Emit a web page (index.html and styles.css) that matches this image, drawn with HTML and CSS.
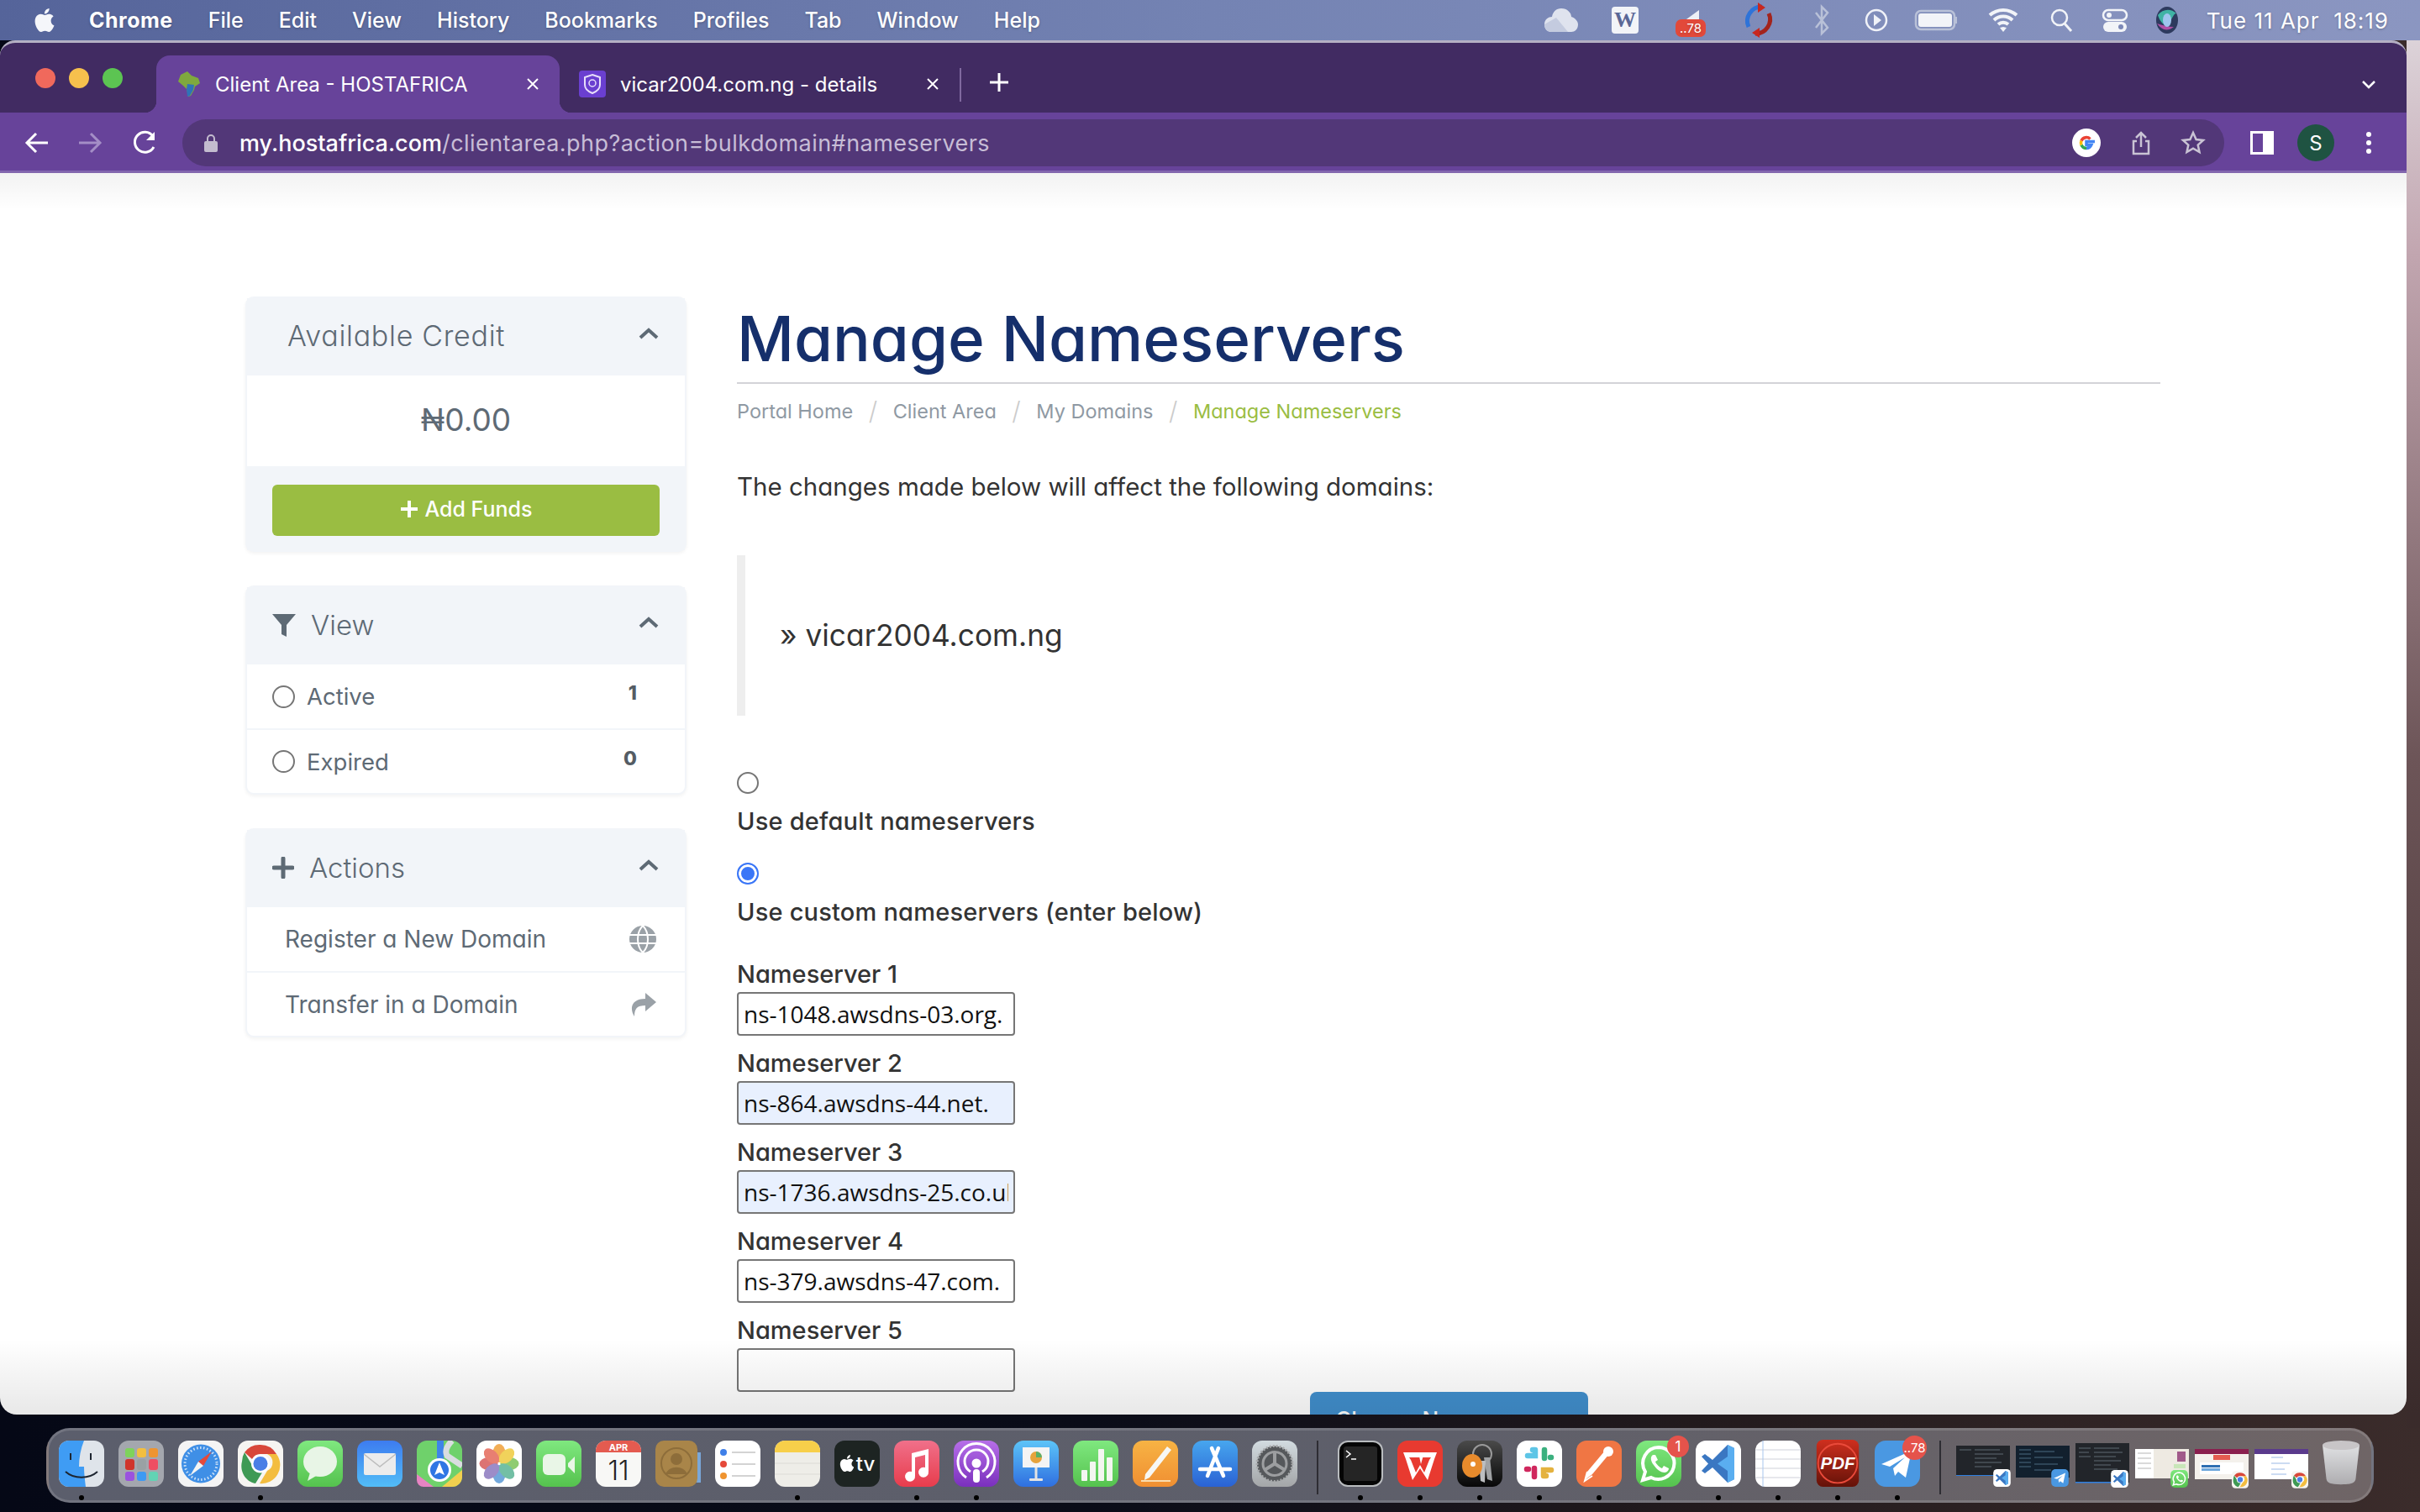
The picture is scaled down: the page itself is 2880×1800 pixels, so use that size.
FILE: index.html
```html
<!DOCTYPE html>
<html lang="en">
<head>
    <meta charset="UTF-8">
    <title>Client Area - HOSTAFRICA</title>
    <link rel="stylesheet" href="styles.css">
</head>
<body>
    <svg class="defs" xmlns="http://www.w3.org/2000/svg">
        <defs>
            <linearGradient id="g-blue" x1="0" y1="0" x2="0" y2="1"><stop offset="0" stop-color="#3d7cf0"/><stop offset="1" stop-color="#52bdf7"/></linearGradient>
            <linearGradient id="g-green" x1="0" y1="0" x2="0" y2="1"><stop offset="0" stop-color="#7fe87f"/><stop offset="1" stop-color="#55c24e"/></linearGradient>
            <linearGradient id="g-music" x1="0" y1="0" x2="0" y2="1"><stop offset="0" stop-color="#f0708a"/><stop offset="1" stop-color="#e83c4c"/></linearGradient>
            <linearGradient id="g-pod" x1="0" y1="0" x2="0" y2="1"><stop offset="0" stop-color="#b66ee8"/><stop offset="1" stop-color="#7a30bd"/></linearGradient>
            <linearGradient id="g-key" x1="0" y1="0" x2="0" y2="1"><stop offset="0" stop-color="#5cc4f8"/><stop offset="1" stop-color="#2f6fe0"/></linearGradient>
            <linearGradient id="g-pages" x1="0" y1="0" x2="0" y2="1"><stop offset="0" stop-color="#f7b344"/><stop offset="1" stop-color="#f08f32"/></linearGradient>
            <linearGradient id="g-app" x1="0" y1="0" x2="0" y2="1"><stop offset="0" stop-color="#47a6ee"/><stop offset="1" stop-color="#2a62d4"/></linearGradient>
            <linearGradient id="g-gear" x1="0" y1="0" x2="0" y2="1"><stop offset="0" stop-color="#d2dbe0"/><stop offset="1" stop-color="#a4a6a8"/></linearGradient>
            <linearGradient id="g-pdf" x1="0" y1="0" x2="0" y2="1"><stop offset="0" stop-color="#cf2f1e"/><stop offset="1" stop-color="#641208"/></linearGradient>
            <linearGradient id="g-trash" x1="0" y1="0" x2="0" y2="1"><stop offset="0" stop-color="#dfe0e2"/><stop offset="1" stop-color="#aeadb0"/></linearGradient>
            <linearGradient id="g-keychain" x1="0" y1="0" x2="0" y2="1"><stop offset="0" stop-color="#4a4a4a"/><stop offset="1" stop-color="#070707"/></linearGradient>
            <symbol id="apple" viewBox="0 0 24 24"><path d="M12.152 6.896c-.948 0-2.415-1.078-3.96-1.04-2.04.027-3.91 1.183-4.961 3.014-2.117 3.675-.546 9.103 1.519 12.09 1.013 1.454 2.208 3.09 3.792 3.039 1.52-.065 2.09-.987 3.935-.987 1.831 0 2.35.987 3.96.948 1.637-.026 2.676-1.48 3.676-2.948 1.156-1.688 1.636-3.325 1.662-3.415-.039-.013-3.182-1.221-3.22-4.857-.026-3.04 2.48-4.494 2.597-4.559-1.429-2.09-3.623-2.324-4.39-2.376-2-.156-3.675 1.09-4.61 1.09zM15.53 3.83c.843-1.012 1.4-2.427 1.245-3.83-1.207.052-2.662.805-3.532 1.818-.78.896-1.454 2.338-1.273 3.714 1.338.104 2.715-.688 3.559-1.701"/></symbol>
            <symbol id="chrome" viewBox="0 0 54 55">
                <rect width="54" height="55" rx="12" fill="#f6f5f2"/>
                <path d="M27 5a22 22 0 0 1 19 11H27a11 11 0 0 0-10 6L8 14A22 22 0 0 1 27 5z" fill="#d8473a"/>
                <path d="M8 14l10 17a11 11 0 0 0 11 7l-8 13C9 49 2 36 5 25a22 22 0 0 1 3-11z" fill="#3f9a55"/>
                <path d="M46 16a22 22 0 0 1-20 35l9-15a11 11 0 0 0 0-20z" fill="#f3bd3f"/>
                <circle cx="27" cy="27.5" r="11" fill="#fff"/><circle cx="27" cy="27.5" r="8.5" fill="#4a7fe6"/>
            </symbol>
            <symbol id="code" viewBox="0 0 54 55">
                <rect width="54" height="55" rx="12" fill="#fff"/>
                <path d="M38 5l8 4v37l-8 4L20 32l-9 7-4-3 8-8.500-8-8.500 4-3 9 7z" fill="#3a77c2"/><path d="M38 5l8 4v37l-8 4V36L26 27.500 38 19z" fill="#5aaef0"/>
            </symbol>
            <symbol id="tele" viewBox="0 0 54 55">
                <rect width="54" height="55" rx="13" fill="#4a98e2"/>
                <path d="M8 28L44 12 37 44 28 37 24 42 22 33 36 20 18 31z" fill="#fff"/>
            </symbol>
            <symbol id="whats" viewBox="0 0 54 55">
                <rect width="54" height="55" rx="13" fill="url(#g-green)"/>
                <path d="M27 8a19 19 0 0 0-16 29l-3 10 10-3A19 19 0 1 0 27 8z" fill="none" stroke="#fff" stroke-width="4"/>
                <path d="M20 17c-3 2-3 7 1 12 4 6 9 9 13 9 3 0 5-3 5-5l-6-3-2 3c-3-1-7-5-8-8l3-2-3-6z" fill="#fff"/>
            </symbol>
        </defs>
    </svg>

    <div class="menubar">
        <svg class="apple-logo" width="28" height="34"><use href="#apple"/></svg>
        <span class="menu-app">Chrome</span>
        <span>File</span>
        <span>Edit</span>
        <span>View</span>
        <span>History</span>
        <span>Bookmarks</span>
        <span>Profiles</span>
        <span>Tab</span>
        <span>Window</span>
        <span>Help</span>
        <div class="status">
            <svg width="76" height="48" viewBox="0 0 76 48"><path d="M38 10c7 0 12 5 12 10 4 1 8 5 8 9 0 6-4 9-8 9H26c-5 0-8-4-8-9 0-6 5-9 9-9 1-6 5-10 11-10z" fill="#dfe3ee"/><path d="M18 29l14-8 14 17H26c-5 0-8-4-8-9z" fill="#c4cbdf"/></svg>
            <svg width="76" height="48" viewBox="0 0 76 48"><rect x="22" y="8" width="32" height="32" rx="4" fill="#f2f4f8"/><text x="38" y="32" class="status-w">W</text></svg>
            <svg width="80" height="48" viewBox="0 0 80 48"><path d="M50 12L28 28h12l10 6z" fill="#eef0f6"/><rect x="22" y="23" width="36" height="21" rx="7" fill="#e2493a"/><text x="40" y="39" class="status-78">..78</text></svg>
            <svg width="82" height="48" viewBox="0 0 82 48"><path d="M45 8A17 17 0 0 0 29 32" fill="none" stroke="#2e73d8" stroke-width="5"/><path d="M37 40A17 17 0 0 0 53 16" fill="none" stroke="#a3241c" stroke-width="5"/><path d="M40 3l9 6-9 6zM42 45l-9-6 9-6z" fill="#c8281f"/></svg>
            <svg width="68" height="48" viewBox="0 0 68 48"><path d="M27 15l14 18-7 7V8l7 7-14 18" fill="none" stroke="#b9c1d8" stroke-width="2.500"/></svg>
            <svg width="62" height="48" viewBox="0 0 62 48"><circle cx="31" cy="24" r="12" fill="none" stroke="#f0f2f8" stroke-width="2.500"/><path d="M28 17l9 7-9 7z" fill="#f0f2f8"/></svg>
            <svg width="80" height="48" viewBox="0 0 80 48"><rect x="16" y="13" width="46" height="22" rx="6" fill="none" stroke="#b9c1d8" stroke-width="2.500"/><rect x="19" y="16" width="40" height="16" rx="3" fill="#f2f4f8"/><rect x="63" y="20" width="2" height="8" fill="#b9c1d8"/></svg>
            <svg width="80" height="48" viewBox="0 0 80 48"><path d="M24 18a24 24 0 0 1 32 0M29 24a16 16 0 0 1 22 0M34 29a9 9 0 0 1 12 0" fill="none" stroke="#f2f4f8" stroke-width="4"/><path d="M36 33l4-1 4 1-4 5z" fill="#f2f4f8"/></svg>
            <svg width="58" height="48" viewBox="0 0 58 48"><circle cx="27" cy="21" r="9" fill="none" stroke="#f2f4f8" stroke-width="2.500"/><path d="M33 28l8 9" stroke="#f2f4f8" stroke-width="3"/></svg>
            <svg width="70" height="48" viewBox="0 0 70 48"><rect x="21" y="12" width="28" height="12" rx="6" fill="none" stroke="#f2f4f8" stroke-width="2.500"/><rect x="21" y="26" width="28" height="12" rx="6" fill="#f2f4f8"/><circle cx="28" cy="18" r="3" fill="#f2f4f8"/><circle cx="42" cy="32" r="3" fill="#7c88b6"/></svg>
            <svg width="54" height="48" viewBox="0 0 54 48"><ellipse cx="27" cy="24" rx="13" ry="16" fill="#2d3a5e"/><path d="M16 18c6-8 16-8 22-2-4-1-6 12-12 14-4 0-8-6-10-12z" fill="#3fb3a4"/><path d="M15 28c6 8 12 10 20 4-6 0-14-2-20-4z" fill="#b04fa5"/><ellipse cx="27" cy="24" rx="5" ry="8" fill="#9fc5ee"/></svg>
            <span class="clock">Tue 11 Apr&nbsp; 18:19</span>
        </div>
    </div>

    <div class="window">
        <div class="tabstrip">
            <div class="lights">
                <i class="light red"></i>
                <i class="light yellow"></i>
                <i class="light green"></i>
            </div>
            <div class="tab active">
                <svg width="28" height="32" viewBox="0 0 28 32"><path d="M4 5l8-4 5 5 8 3 2 6-6 4-1 4-4 7-3 1-2-9-4-4-6-5z" fill="#7fa93e"/><path d="M12 16l8 1-1 6-4 7-3 1-1-9z" fill="#2f72b8"/></svg>
                <span class="tab-title">Client Area - HOSTAFRICA</span>
                <svg class="tab-close" width="16" height="16" viewBox="0 0 16 16"><path d="M2 2l12 12M14 2L2 14" stroke="#fff" stroke-width="2"/></svg>
            </div>
            <div class="tab">
                <svg width="32" height="32" viewBox="0 0 32 32"><rect width="32" height="32" rx="4" fill="#6a3fd0"/><path d="M16 5l9 3v9c0 5-4 8-9 10-5-2-9-5-9-10V8z" fill="none" stroke="#e7defa" stroke-width="2"/><circle cx="16" cy="15" r="4" fill="none" stroke="#e7defa" stroke-width="1.500"/></svg>
                <span class="tab-title">vicar2004.com.ng - details</span>
                <svg class="tab-close" width="16" height="16" viewBox="0 0 16 16"><path d="M2 2l12 12M14 2L2 14" stroke="#fff" stroke-width="2"/></svg>
            </div>
            <span class="tab-sep"></span>
            <svg class="tab-new" width="24" height="24" viewBox="0 0 24 24"><path d="M12 1v22M1 12h22" stroke="#fff" stroke-width="3"/></svg>
            <svg class="tab-list" width="18" height="12" viewBox="0 0 18 12"><path d="M2 2l7 7 7-7" fill="none" stroke="#fff" stroke-width="2.500"/></svg>
        </div>

        <div class="toolbar">
            <svg class="tool" width="30" height="28" viewBox="0 0 30 28"><path d="M28 14H4M14 3L3 14l11 11" fill="none" stroke="#fff" stroke-width="3"/></svg>
            <svg class="tool" width="30" height="28" viewBox="0 0 30 28"><path d="M2 14h24M16 3l11 11-11 11" fill="none" stroke="#a48ec6" stroke-width="3"/></svg>
            <svg class="tool tool-reload" width="30" height="30" viewBox="0 0 30 30"><path d="M25 20A12 12 0 1 1 24 7" fill="none" stroke="#fff" stroke-width="3"/><path d="M26 2v10H16z" fill="#fff"/></svg>
            <div class="omnibox">
                <svg width="16" height="22" viewBox="0 0 16 22"><path d="M4 10V6a4 4 0 0 1 8 0v4" fill="none" stroke="#c3bccf" stroke-width="2"/><rect y="9" width="16" height="13" rx="2" fill="#c3bccf"/></svg>
                <span class="url"><b>my.hostafrica.com</b>/clientarea.php?action=bulkdomain#nameservers</span>
                <svg class="omni-g" width="34" height="34" viewBox="0 0 34 34"><circle cx="17" cy="17" r="17" fill="#fff"/><path d="M27 15.500H17v4h5.800a6.500 6.500 0 0 1-5.800 4" fill="none" stroke="#4285f4" stroke-width="3.500"/><path d="M17 23.500a6.500 6.500 0 0 1-6-4" fill="none" stroke="#34a853" stroke-width="3.500"/><path d="M11 19.500a6.500 6.500 0 0 1 0-5" fill="none" stroke="#fbbc05" stroke-width="3.500"/><path d="M11 14.500a6.500 6.500 0 0 1 10.500-2" fill="none" stroke="#ea4335" stroke-width="3.500"/></svg>
                <svg class="omni-share" width="26" height="30" viewBox="0 0 26 30"><path d="M13 20V3M7 9l6-6 6 6M8 13H4v15h18V13h-4" fill="none" stroke="#c9c3d4" stroke-width="2.500"/></svg>
                <svg width="30" height="30" viewBox="0 0 30 30"><path d="M15 3l3.600 8 8.400.9-6.300 5.700 1.800 8.400L15 21.700 7.500 26l1.800-8.400L3 11.900l8.400-.9z" fill="none" stroke="#c9c3d4" stroke-width="2.500"/></svg>
            </div>
            <span class="side-panel"></span>
            <span class="avatar">S</span>
            <span class="kebab"><i></i><i></i><i></i></span>
        </div>

        <div class="page">
            <div class="sidebar">
                <div class="panel">
                    <div class="panel-head">
                        <span class="panel-title credit-title">Available Credit</span>
                        <svg class="chevron" width="26" height="16" viewBox="0 0 26 16"><path d="M3 13l10-9 10 9" fill="none" stroke="#5e6a75" stroke-width="4"/></svg>
                    </div>
                    <div class="credit-amount">₦0.00</div>
                    <div class="panel-foot">
                        <a class="btn-funds" href="#"><svg width="22" height="22" viewBox="0 0 22 22"><path d="M11 1v20M1 11h20" stroke="#fff" stroke-width="4"/></svg>Add Funds</a>
                    </div>
                </div>

                <div class="panel">
                    <div class="panel-head">
                        <svg width="28" height="28" viewBox="0 0 28 28"><path d="M0 1h28L17 14v14l-6-3V14z" fill="#5e6a75"/></svg>
                        <span class="panel-title">View</span>
                        <svg class="chevron" width="26" height="16" viewBox="0 0 26 16"><path d="M3 13l10-9 10 9" fill="none" stroke="#5e6a75" stroke-width="4"/></svg>
                    </div>
                    <label class="row"><input type="radio" name="view"><span>Active</span><b class="count">1</b></label>
                    <label class="row"><input type="radio" name="view"><span>Expired</span><b class="count">0</b></label>
                </div>

                <div class="panel">
                    <div class="panel-head">
                        <svg width="26" height="26" viewBox="0 0 26 26"><path d="M13 2v22M2 13h22" stroke="#5e6a75" stroke-width="5" stroke-linecap="round"/></svg>
                        <span class="panel-title">Actions</span>
                        <svg class="chevron" width="26" height="16" viewBox="0 0 26 16"><path d="M3 13l10-9 10 9" fill="none" stroke="#5e6a75" stroke-width="4"/></svg>
                    </div>
                    <a class="row link-row" href="#"><span>Register a New Domain</span>
                        <svg width="32" height="32" viewBox="0 0 32 32"><circle cx="16" cy="16" r="16" fill="#9aa1a7"/><path d="M0 11h32M0 21h32M16 0c-8 8-8 24 0 32M16 0c8 8 8 24 0 32" fill="none" stroke="#fff" stroke-width="2"/></svg>
                    </a>
                    <a class="row link-row" href="#"><span>Transfer in a Domain</span>
                        <svg width="32" height="30" viewBox="0 0 32 30"><path d="M19 1l13 11-13 11v-7C11 16 6 18 6 29 0 20 2 8 19 8z" fill="#9aa1a7"/></svg>
                    </a>
                </div>
            </div>

            <div class="main">
                <h1 class="page-title">Manage Nameservers</h1>
                <div class="crumbs">
                    <a href="#">Portal Home</a><i>/</i>
                    <a href="#">Client Area</a><i>/</i>
                    <a href="#">My Domains</a><i>/</i>
                    <span>Manage Nameservers</span>
                </div>
                <p class="intro">The changes made below will affect the following domains:</p>
                <blockquote class="domains">» vicar2004.com.ng</blockquote>

                <form class="ns-form">
                    <input class="ns-radio" type="radio" name="ns">
                    <label class="ns-choice">Use default nameservers</label>
                    <input class="ns-radio" type="radio" name="ns" checked>
                    <label class="ns-choice">Use custom nameservers (enter below)</label>

                    <div class="ns-fields">
                        <label>Nameserver 1</label>
                        <input type="text" value="ns-1048.awsdns-03.org.">
                        <label>Nameserver 2</label>
                        <input class="autofill" type="text" value="ns-864.awsdns-44.net.">
                        <label>Nameserver 3</label>
                        <input class="autofill" type="text" value="ns-1736.awsdns-25.co.uk.">
                        <label>Nameserver 4</label>
                        <input type="text" value="ns-379.awsdns-47.com.">
                        <label>Nameserver 5</label>
                        <input type="text">
                    </div>
                    <div class="ns-submit"><button type="button">Change Nameservers</button></div>
                </form>
            </div>
        </div>
    </div>

    <div class="dock">
        <div class="app run"><svg viewBox="0 0 54 55"><rect width="54" height="55" rx="12" fill="#dfe4ea"/><path d="M12 0h18c-4 10-6 20-6 31h6c0 8 1 16 2 24H12A12 12 0 0 1 0 43V12A12 12 0 0 1 12 0z" fill="#3f9cf4"/><path d="M8 37c10 9 28 9 38 0" fill="none" stroke="#1d2530" stroke-width="2"/><path d="M14 15v8M38 15v8" stroke="#1d2530" stroke-width="2"/></svg></div>
        <div class="app"><svg viewBox="0 0 54 55"><rect width="54" height="55" rx="12" fill="#a4a7ae"/><rect x="8" y="9" width="11" height="11" rx="3" fill="#7ed35b"/><rect x="22" y="9" width="11" height="11" rx="3" fill="#f3bf3f"/><rect x="36" y="9" width="11" height="11" rx="3" fill="#ee9430"/><rect x="8" y="22" width="11" height="13" rx="3" fill="#d0352c"/><rect x="22" y="22" width="11" height="13" rx="3" fill="#9aa1a4"/><rect x="36" y="22" width="11" height="13" rx="3" fill="#ee4e62"/><rect x="8" y="37" width="11" height="11" rx="3" fill="#9a52df"/><rect x="22" y="37" width="11" height="11" rx="3" fill="#3d9af2"/><rect x="36" y="37" width="11" height="11" rx="3" fill="#62d3b4"/></svg></div>
        <div class="app"><svg viewBox="0 0 54 55"><rect width="54" height="55" rx="12" fill="#f4f4f4"/><circle cx="27" cy="27.500" r="23" fill="#3f8fe6"/><circle cx="27" cy="27.500" r="19" fill="none" stroke="#cfe3f8" stroke-width="3" stroke-dasharray="1.500 2.500"/><path d="M40 13L24 25l6 5z" fill="#e5493a"/><path d="M14 42l10-17 6 5z" fill="#f4f4f4"/></svg></div>
        <div class="app run"><svg viewBox="0 0 54 55"><use href="#chrome"/></svg></div>
        <div class="app"><svg viewBox="0 0 54 55"><rect width="54" height="55" rx="12" fill="url(#g-green)"/><ellipse cx="27" cy="25" rx="20" ry="18" fill="#e8f5e6"/><path d="M15 38l-3 10 12-7z" fill="#e8f5e6"/></svg></div>
        <div class="app"><svg viewBox="0 0 54 55"><rect width="54" height="55" rx="12" fill="url(#g-blue)"/><rect x="8" y="15" width="38" height="26" rx="2" fill="#ececec"/><path d="M8 16l19 15 19-15" fill="none" stroke="#bdbdbd" stroke-width="1.500"/></svg></div>
        <div class="app"><svg viewBox="0 0 54 55"><rect width="54" height="55" rx="12" fill="#6fd16b"/><path d="M0 40l20 15H8A8 8 0 0 1 0 47z" fill="#e784c3"/><path d="M30 55l24-20v8a12 12 0 0 1-12 12z" fill="#f2d04f"/><path d="M24 0h8v22h-8z" fill="#3f84e8"/><path d="M54 30L36 18c-3-6 0-12 6-18" fill="none" stroke="#d9dde0" stroke-width="7"/><circle cx="27" cy="35" r="14" fill="#fff"/><circle cx="27" cy="35" r="11" fill="#2f76e4"/><path d="M27 26l6 15-6-3-6 3z" fill="#fff"/></svg></div>
        <div class="app"><svg viewBox="0 0 54 55"><rect width="54" height="55" rx="12" fill="#fff"/><g opacity=".85"><ellipse cx="27" cy="15" rx="7.500" ry="11" fill="#f0a03a"/><ellipse cx="27" cy="40" rx="7.500" ry="11" fill="#5a9ad6"/><ellipse cx="14.500" cy="27.500" rx="11" ry="7.500" fill="#d65b5b"/><ellipse cx="39.500" cy="27.500" rx="11" ry="7.500" fill="#7cc45a"/><ellipse cx="18" cy="18.500" rx="7" ry="11" transform="rotate(-45 18 18.500)" fill="#e4695a"/><ellipse cx="36" cy="18.500" rx="7" ry="11" transform="rotate(45 36 18.500)" fill="#efcb3f"/><ellipse cx="18" cy="36.500" rx="7" ry="11" transform="rotate(45 18 36.500)" fill="#8b78bf"/><ellipse cx="36" cy="36.500" rx="7" ry="11" transform="rotate(-45 36 36.500)" fill="#5bb596"/></g></svg></div>
        <div class="app"><svg viewBox="0 0 54 55"><rect width="54" height="55" rx="12" fill="url(#g-green)"/><rect x="8" y="16" width="27" height="25" rx="6" fill="#e9f6e7"/><path d="M38 27l8-8v20l-8-8z" fill="#e9f6e7"/></svg></div>
        <div class="app"><svg viewBox="0 0 54 55"><rect width="54" height="55" rx="12" fill="#f8f8f6"/><path d="M0 14V12A12 12 0 0 1 12 0h30a12 12 0 0 1 12 12v2z" fill="#e45b50"/><text x="27" y="11.500" class="dock-cal-m">APR</text><text x="27" y="47" class="dock-cal-d">11</text></svg></div>
        <div class="app"><svg viewBox="0 0 54 55"><rect x="44" y="14" width="10" height="36" fill="#7aa7d8"/><rect width="50" height="55" rx="10" fill="#a98549"/><circle cx="25" cy="27" r="18" fill="none" stroke="#8d6d3a" stroke-width="2"/><circle cx="25" cy="22" r="7" fill="#8d6d3a"/><path d="M12 40c4-11 22-11 26 0" fill="#8d6d3a"/></svg></div>
        <div class="app"><svg viewBox="0 0 54 55"><rect width="54" height="55" rx="12" fill="#fff"/><circle cx="10" cy="14" r="4" fill="#3f7fe8"/><circle cx="10" cy="28" r="4" fill="#e5493a"/><circle cx="10" cy="42" r="4" fill="#ef9430"/><path d="M20 14h28M20 28h28M20 42h28" stroke="#c5c5c5" stroke-width="1.500"/></svg></div>
        <div class="app run"><svg viewBox="0 0 54 55"><rect width="54" height="55" rx="12" fill="#eeede8"/><path d="M0 14V12A12 12 0 0 1 12 0h30a12 12 0 0 1 12 12v2z" fill="#f7cf4a"/><path d="M0 27h54M0 40h54" stroke="#dcdbd6"/></svg></div>
        <div class="app"><svg viewBox="0 0 54 55"><rect width="54" height="55" rx="12" fill="#1d2422"/><svg x="5" y="16" width="20" height="22" fill="#fff"><use href="#apple"/></svg><text x="37" y="36" class="dock-tv">tv</text></svg></div>
        <div class="app run"><svg viewBox="0 0 54 55"><rect width="54" height="55" rx="12" fill="url(#g-music)"/><path d="M21 15l20-5v27a6 6 0 1 1-4-5V17l-12 3v22a6 6 0 1 1-4-5z" fill="#fff"/></svg></div>
        <div class="app run"><svg viewBox="0 0 54 55"><rect width="54" height="55" rx="12" fill="url(#g-pod)"/><path d="M15 44a22 22 0 1 1 24 0M20 37a14 14 0 1 1 14 0" fill="none" stroke="#fff" stroke-width="3"/><circle cx="27" cy="27" r="5.500" fill="#fff"/><rect x="23" y="34" width="8" height="16" rx="4" fill="#fff"/></svg></div>
        <div class="app"><svg viewBox="0 0 54 55"><rect width="54" height="55" rx="12" fill="url(#g-key)"/><rect x="11" y="8" width="32" height="24" fill="#f4f4f4"/><circle cx="27" cy="20" r="7" fill="#e6a33c"/><path d="M27 20V13a7 7 0 0 1 7 7z" fill="#5ab06a"/><rect x="25.500" y="32" width="3" height="14" fill="#e4e4e4"/><rect x="19" y="45" width="16" height="3" rx="1" fill="#e4e4e4"/></svg></div>
        <div class="app"><svg viewBox="0 0 54 55"><rect width="54" height="55" rx="12" fill="url(#g-green)"/><rect x="10" y="35" width="7" height="13" rx="1" fill="#f3f6f0"/><rect x="20" y="25" width="7" height="23" rx="1" fill="#f3f6f0"/><rect x="30" y="10" width="7" height="38" rx="1" fill="#f3f6f0"/><rect x="40" y="20" width="7" height="28" rx="1" fill="#f3f6f0"/></svg></div>
        <div class="app"><svg viewBox="0 0 54 55"><rect width="54" height="55" rx="12" fill="url(#g-pages)"/><path d="M41 7l5 4-26 33-6 3 1-7z" fill="#f7f7f4"/><rect x="10" y="47" width="35" height="2" fill="#f9dcb0"/></svg></div>
        <div class="app"><svg viewBox="0 0 54 55"><rect width="54" height="55" rx="12" fill="url(#g-app)"/><path d="M31 9L18 42M23 9l14 33M9 34h36" stroke="#fff" stroke-width="4.500" stroke-linecap="round"/></svg></div>
        <div class="app"><svg viewBox="0 0 54 55"><rect width="54" height="55" rx="12" fill="url(#g-gear)"/><circle cx="27" cy="27.500" r="21" fill="#55585b"/><circle cx="27" cy="27.500" r="21" fill="none" stroke="#a7a9ab" stroke-width="3" stroke-dasharray="2 2"/><circle cx="27" cy="27.500" r="14" fill="none" stroke="#9c9ea0" stroke-width="3"/><path d="M27 27.500V14M27 27.500L15 35M27 27.500L39 35" stroke="#9c9ea0" stroke-width="4"/></svg></div>
        <span class="dock-sep"></span>
        <div class="app run"><svg viewBox="0 0 54 55"><rect width="54" height="55" rx="12" fill="#b9bcbf"/><rect x="2" y="2" width="50" height="51" rx="10" fill="#050505"/><rect x="7" y="7" width="40" height="41" rx="3" fill="#252525"/><path d="M10 12l5 4-5 4M16 22h6" fill="none" stroke="#fff" stroke-width="1.500"/></svg></div>
        <div class="app run"><svg viewBox="0 0 54 55"><rect width="54" height="55" rx="12" fill="#e83a30"/><path d="M7 14h40l-3 8-8 25-9-14-9 14-8-25z" fill="#fff"/><path d="M14 20h26l-2 3-6 15-5-9-5 9-6-15z" fill="#e83a30"/><path d="M25 14h7l-4 14z" fill="#fff"/></svg></div>
        <div class="app run"><svg viewBox="0 0 54 55"><rect width="54" height="55" rx="12" fill="url(#g-keychain)"/><circle cx="30" cy="16" r="11" fill="none" stroke="#9a9a9a" stroke-width="2"/><path d="M32 20l4 26 6 2-3-28z" fill="#9fa1a3"/><path d="M26 24l2 24 5 2 1-26z" fill="#bcbec0"/><ellipse cx="18" cy="30" rx="12" ry="14" fill="#e88b2c"/><circle cx="19" cy="28" r="3" fill="#fff"/></svg></div>
        <div class="app run"><svg viewBox="0 0 54 55"><rect width="54" height="55" rx="12" fill="#fff"/><g stroke-width="6.500" stroke-linecap="round" fill="none"><path d="M22 11h-3M22 11v7h-9" stroke="#5ec5e6"/><path d="M33 11v10M41 20h-1" stroke="#3bb07f"/><path d="M32 42h3M32 42v-7h9" stroke="#e4b23f"/><path d="M21 33v10M12 34h2" stroke="#d0285e"/></g></svg></div>
        <div class="app run"><svg viewBox="0 0 54 55"><rect width="54" height="55" rx="12" fill="#f07644"/><path d="M11 46l8-6 20-24-5-4-21 25z" fill="#fff"/><circle cx="38" cy="13" r="6" fill="#fff"/><path d="M13 37l-3 11 9-6" fill="none" stroke="#fff" stroke-width="2"/></svg></div>
        <div class="app run"><svg viewBox="0 0 54 55"><use href="#whats"/></svg><span class="badge badge-one">1</span></div>
        <div class="app run"><svg viewBox="0 0 54 55"><use href="#code"/></svg></div>
        <div class="app run"><svg viewBox="0 0 54 55"><rect width="54" height="55" rx="12" fill="#fff"/><path d="M0 11h54M0 22h54M0 33h54M0 44h54" stroke="#dfe1e6" stroke-width="1.500"/><path d="M9 0v55" stroke="#a8c6ee"/></svg></div>
        <div class="app run"><svg viewBox="0 -2 54 59" overflow="visible"><rect y="-3" width="54" height="60" rx="8" fill="url(#g-pdf)"/><circle cx="27" cy="27" r="25" fill="none" stroke="#ea4a3a" stroke-width="2"/><text x="27" y="35" class="dock-pdf">PDF</text></svg></div>
        <div class="app run"><svg viewBox="0 0 54 55"><use href="#tele"/></svg><span class="badge badge-tele">..78</span></div>
        <span class="dock-sep"></span>
        <div class="app"><svg viewBox="0 0 64 55" class="thumb" overflow="visible"><rect y="6" width="64" height="36" fill="#22252a"/><path d="M4 11h14M22 11h30M22 16h34M22 21h26M22 26h32M22 31h20" stroke="#5f6a72"/><rect y="41" width="50" height="1" fill="#2f7fe0"/><svg x="44" y="34" width="21" height="21"><use href="#code"/></svg></svg></div>
        <div class="app"><svg viewBox="0 0 64 55" class="thumb" overflow="visible"><rect y="6" width="64" height="38" fill="#12202e"/><path d="M4 11h14M4 16h14M4 21h14M4 26h14M4 31h14M22 13h24M22 20h34M22 28h28M22 35h20" stroke="#4a6a80"/><svg x="42" y="34" width="21" height="21"><use href="#tele"/></svg></svg></div>
        <div class="app"><svg viewBox="0 0 64 55" class="thumb" overflow="visible"><rect y="3" width="64" height="47" fill="#22252a"/><path d="M4 9h14M4 14h12M4 19h14M22 9h30M22 14h34M22 19h26M22 24h32M22 29h20M22 34h28" stroke="#5f6a72"/><rect y="49" width="50" height="1.500" fill="#2f7fe0"/><svg x="42" y="35" width="21" height="21"><use href="#code"/></svg></svg></div>
        <div class="app"><svg viewBox="0 0 64 55" class="thumb" overflow="visible"><rect y="10" width="64" height="35" fill="#fff"/><rect x="22" y="10" width="42" height="35" fill="#eeeae2"/><path d="M3 15h16M3 21h16M3 27h16M3 33h16" stroke="#b5b5b5"/><rect x="50" y="13" width="10" height="12" fill="#a05a8a"/><rect x="46" y="28" width="14" height="5" fill="#c8e6b8"/><svg x="42" y="35" width="21" height="21"><use href="#whats"/></svg></svg></div>
        <div class="app"><svg viewBox="0 0 64 55" class="thumb" overflow="visible"><rect y="10" width="64" height="36" fill="#f4f1ec"/><rect y="10" width="64" height="6" fill="#8a1f4e"/><rect x="22" y="17" width="20" height="6" fill="#e45b50"/><rect x="6" y="26" width="52" height="14" fill="#fff"/><rect x="8" y="29" width="22" height="3" fill="#2f6fb2"/><rect x="8" y="33" width="22" height="3" fill="#6fa8dc"/><svg x="44" y="36" width="20" height="21"><use href="#chrome"/></svg></svg></div>
        <div class="app"><svg viewBox="0 0 64 55" class="thumb" overflow="visible"><rect y="10" width="64" height="36" fill="#fff"/><rect y="10" width="64" height="6" fill="#5a3a8c"/><path d="M20 20h14M20 27h22M20 34h16M20 40h18" stroke="#9ab8e6"/><svg x="44" y="36" width="20" height="21"><use href="#chrome"/></svg></svg></div>
        <div class="app"><svg viewBox="0 0 54 60" overflow="visible"><path d="M3 6l5 44c1 5 5 7 19 7s18-2 19-7l5-44z" fill="url(#g-trash)"/><ellipse cx="27" cy="6" rx="24" ry="6" fill="#c8c5c7"/></svg></div>
    </div>
</body>
</html>
```

FILE: styles.css
```css
* {
    box-sizing: border-box;
}
body {
    margin: 0;
    width: 2880px;
    height: 1800px;
    overflow: hidden;
    display: flex;
    flex-direction: column;
    font-family: Inter, "Liberation Sans", sans-serif;
    font-feature-settings: "cv11";
    background:
        linear-gradient(to bottom, #ddd4da 40px, #c2a6b0 300px, #6d5558 900px, #3a2b2b 1684px) right top / 16px 1700px no-repeat,
        linear-gradient(to right, #050816 0, #0a0c18 45%, #221a1d 70%, #3b2c2b 100%);
}
.defs {
    display: block;
    width: 0;
    height: 0;
}

/* menu bar */
.menubar {
    height: 48px;
    flex: none;
    display: flex;
    align-items: center;
    gap: 42px;
    padding-left: 39px;
    color: #fff;
    font-size: 25px;
    font-weight: 500;
    font-feature-settings: normal;
    background: linear-gradient(to right, #55649a, #7483b3 50%, #8b96c1);
    text-shadow: 0 1px 3px rgba(0,0,0,.25);
}
.apple-logo {
    fill: #f5f6fa;
    margin-right: -3px;
}
.menu-app {
    font-weight: 700;
    letter-spacing: .5px;
}
.status {
    margin-left: auto;
    display: flex;
    align-items: center;
    padding-right: 37px;
}
.clock {
    margin-left: 20px;
    font-weight: 400;
    font-size: 26px;
    letter-spacing: 1px;
}
.status-w {
    font: 700 26px "Liberation Serif", serif;
    fill: #5a6796;
    text-anchor: middle;
    text-shadow: none;
}
.status-78 {
    font: 400 15px Inter, sans-serif;
    fill: #fff;
    text-anchor: middle;
}

/* browser window */
.window {
    width: 2864px;
    height: 1636px;
    flex: none;
    display: flex;
    flex-direction: column;
    overflow: hidden;
    background: #fff;
    border-top: 3px solid #b4b0c4;
    border-radius: 18px 18px 20px 20px;
}
.tabstrip {
    height: 83px;
    flex: none;
    display: flex;
    align-items: flex-end;
    background: #412b62;
}
.lights {
    display: flex;
    align-self: center;
    gap: 16px;
    padding-left: 42px;
    width: 186px;
}
.light {
    width: 24px;
    height: 24px;
    border-radius: 50%;
}
.red { background: #f0695c; }
.yellow { background: #f6c04d; }
.green { background: #5cc452; }
.tab {
    position: relative;
    height: 68px;
    display: flex;
    align-items: center;
    gap: 17px;
    width: 480px;
    padding: 0 24px 0 25px;
    color: #fff;
    font-size: 24px;
    font-feature-settings: normal;
    border-radius: 16px 16px 0 0;
}
.tab + .tab {
    width: 476px;
    padding-left: 23px;
}
.tab.active {
    background: #67439a;
}
.tab.active::before,
.tab.active::after {
    content: "";
    position: absolute;
    bottom: 0;
    width: 14px;
    height: 14px;
}
.tab.active::before {
    left: -14px;
    background: radial-gradient(circle at 0 0, transparent 14px, #67439a 14.5px);
}
.tab.active::after {
    right: -14px;
    background: radial-gradient(circle at 100% 0, transparent 14px, #67439a 14.5px);
}
.tab-title {
    white-space: nowrap;
}
.tab-close {
    margin-left: auto;
}
.tab-sep {
    width: 2px;
    height: 40px;
    margin-bottom: 13px;
    background: #80699f;
}
.tab-new {
    align-self: center;
    margin-left: 33px;
    margin-top: 10px;
}
.tab-list {
    align-self: center;
    margin-left: auto;
    margin-right: 36px;
    margin-top: 16px;
}
.toolbar {
    height: 72px;
    flex: none;
    display: flex;
    align-items: center;
    padding: 3px 0 0 29px;
    gap: 33px;
    background: #67439a;
    border-bottom: 3px solid #8266ae;
}
.tool-reload {
    margin-left: 3px;
}
.omnibox {
    width: 2430px;
    height: 56px;
    margin-left: -4px;
    display: flex;
    align-items: center;
    gap: 28px;
    padding: 0 22px 0 26px;
    background: #523778;
    border-radius: 28px;
}
.url {
    flex: 1;
    white-space: nowrap;
    margin-left: -2px;
    color: #c7bdd6;
    font-size: 27px;
    letter-spacing: .45px;
    font-feature-settings: normal;
}
.url b {
    color: #fff;
    font-weight: 500;
    letter-spacing: 0;
}
.omni-g {
    margin-right: 7px;
}
.omni-share {
    margin-right: 6px;
}
.side-panel {
    width: 28px;
    height: 28px;
    border: solid #fff;
    border-width: 3px 13px 3px 3px;
    margin-left: -2px;
}
.avatar {
    width: 44px;
    height: 44px;
    margin-left: -5px;
    display: flex;
    align-items: center;
    justify-content: center;
    border-radius: 50%;
    color: #fff;
    font-size: 24px;
    background: #1f5342;
}
.kebab {
    display: flex;
    flex-direction: column;
    gap: 4px;
    margin-left: 5px;
}
.kebab i {
    width: 6px;
    height: 6px;
    border-radius: 50%;
    background: #fff;
}

/* page */
.page {
    position: relative;
    flex: 1;
    overflow: hidden;
    display: flex;
    gap: 60px;
    padding: 147px 0 0 292px;
}
.page::after {
    content: "";
    position: absolute;
    inset: 0;
    pointer-events: none;
    background:
        linear-gradient(to bottom, rgba(0,0,0,.05), transparent 44px),
        linear-gradient(to top, rgba(0,0,0,.09), transparent 90px);
}
.sidebar {
    width: 525px;
    flex: none;
    display: flex;
    flex-direction: column;
    gap: 40px;
}
.panel {
    border: 2px solid #f2f5f9;
    border-radius: 10px;
    box-shadow: 0 2px 4px rgba(0,0,0,.05);
    color: #5e6a75;
    background: #fff;
}
.panel-head {
    height: 92px;
    display: flex;
    align-items: center;
    gap: 18px;
    padding: 0 30px 3px;
    background: #f2f5f9;
}
.panel-title {
    font-size: 33px;
    font-weight: 300;
}
.credit-title {
    margin-left: 18px;
    font-size: 34px;
    letter-spacing: .7px;
}
.chevron {
    margin-left: auto;
    margin-top: -6px;
}
.credit-amount {
    height: 108px;
    display: flex;
    align-items: center;
    justify-content: center;
    padding-bottom: 3px;
    font-size: 37px;
}
.panel-foot {
    padding: 22px 30px 17px;
    background: #f2f5f9;
}
.btn-funds {
    height: 61px;
    display: flex;
    align-items: center;
    justify-content: center;
    gap: 8px;
    padding-bottom: 4px;
    color: #fff;
    font-size: 25px;
    font-weight: 500;
    text-decoration: none;
    background: #9abd42;
    border-radius: 6px;
}
.row {
    height: 77px;
    display: flex;
    align-items: center;
    gap: 14px;
    padding: 0 30px;
    font-size: 27.5px;
    color: #5e6a75;
    text-decoration: none;
    border-top: 2px solid #f2f5f9;
}
.panel-head + .row {
    height: 76px;
    border-top: 0;
}
.row input,
.ns-radio {
    appearance: none;
    margin: 0;
    border: 2px solid #767676;
    border-radius: 50%;
    background: #fff;
}
.row input {
    width: 27px;
    height: 27px;
}
.count {
    margin-left: auto;
    margin-right: 27px;
    margin-top: -8px;
    font-size: 23px;
    font-weight: 800;
    color: #545c64;
}
.link-row {
    justify-content: space-between;
    padding: 0 34px 0 45px;
    font-size: 28px;
}
.main {
    width: 1694px;
    flex: none;
    color: #333;
}
.page-title {
    margin: 0;
    height: 104px;
    padding-top: 8px;
    color: #152f6b;
    font-size: 74.5px;
    font-weight: 500;
    line-height: 84px;
    border-bottom: 2px solid #d3d3d8;
}
.crumbs {
    display: flex;
    align-items: center;
    height: 36px;
    margin-top: 14px;
    font-size: 23.5px;
    color: #8f99a3;
}
.crumbs a {
    color: #8f99a3;
    text-decoration: none;
}
.crumbs i {
    margin: 0 18.5px;
    font-style: normal;
    font-weight: 300;
    font-size: 30px;
    color: #ccc;
}
.crumbs span {
    color: #9abd42;
}
.intro {
    margin: 52px 0 0;
    height: 40px;
    font-size: 29.5px;
    line-height: 40px;
}
.domains {
    margin: 62px 0 0;
    height: 191px;
    display: flex;
    align-items: center;
    padding-left: 41px;
    font-size: 35.3px;
    border-left: 10px solid #eee;
}
.ns-form {
    margin-top: 67px;
    display: flex;
    flex-direction: column;
    align-items: flex-start;
}
.ns-radio {
    width: 26px;
    height: 26px;
}
.ns-radio:checked {
    border-color: #3a76f7;
    background: #3a76f7;
    box-shadow: inset 0 0 0 3px #fff;
}
.ns-choice {
    height: 82px;
    padding-top: 14px;
    font-size: 29px;
    font-weight: 500;
    letter-spacing: .2px;
    line-height: 38px;
}
.ns-fields {
    margin-top: -8px;
    display: flex;
    flex-direction: column;
    align-items: flex-start;
}
.ns-fields label {
    height: 54px;
    padding-top: 15px;
    font-size: 29px;
    font-weight: 500;
    line-height: 36px;
}
.ns-fields input {
    width: 331px;
    height: 52px;
    padding: 0 6px;
    font-family: "Open Sans", sans-serif;
    font-size: 28px;
    color: #111;
    background: #fff;
    border: 2px solid #767676;
    border-radius: 4px;
}
.ns-fields input.autofill {
    background: #e8f0fe;
}
.ns-submit {
    align-self: stretch;
    text-align: center;
}
.ns-submit button {
    width: 331px;
    height: 72px;
    padding: 0 0 7px;
    color: #fff;
    font-family: inherit;
    font-size: 26px;
    font-weight: 500;
    background: #418fcd;
    border: 0;
    border-radius: 8px;
}

/* dock */
.dock {
    width: 2770px;
    height: 89px;
    flex: none;
    margin: 16px 0 0 55px;
    display: flex;
    align-items: flex-start;
    gap: 17px;
    padding: 12px 0 0 12px;
    background: linear-gradient(to right, #5b5e6c, #5e5f6a 60%, #6f6566);
    border: 3px solid rgba(255,255,255,.14);
    border-radius: 28px;
}
.app {
    position: relative;
    width: 54px;
    height: 72px;
    flex: none;
}
.app > svg {
    display: block;
    width: 54px;
    height: 55px;
}
.app > svg.thumb {
    width: 64px;
    margin-left: -5px;
}
.app.run::after {
    content: "";
    display: block;
    width: 6px;
    height: 6px;
    margin: 10px auto 0;
    border-radius: 50%;
    background: #000;
}
.dock-sep {
    width: 2px;
    height: 64px;
    margin: 0 6px;
    background: #2e2d33;
}
.badge {
    position: absolute;
    display: flex;
    align-items: center;
    justify-content: center;
    border-radius: 50%;
    color: #fff;
    font-size: 17px;
    background: #e5534b;
}
.badge-one {
    top: -6px;
    right: -9px;
    width: 26px;
    height: 26px;
}
.badge-tele {
    top: -6px;
    right: -8px;
    width: 29px;
    height: 29px;
    font-size: 15px;
}
.dock-cal-m {
    font: 700 11px Inter, sans-serif;
    fill: #fff;
    text-anchor: middle;
}
.dock-cal-d {
    font: 300 32px Inter, sans-serif;
    fill: #222;
    text-anchor: middle;
}
.dock-tv {
    font: 500 24px Inter, sans-serif;
    fill: #fff;
    text-anchor: middle;
}
.dock-pdf {
    font: italic 700 22px "Liberation Sans", sans-serif;
    fill: #fff;
    text-anchor: middle;
}
```
